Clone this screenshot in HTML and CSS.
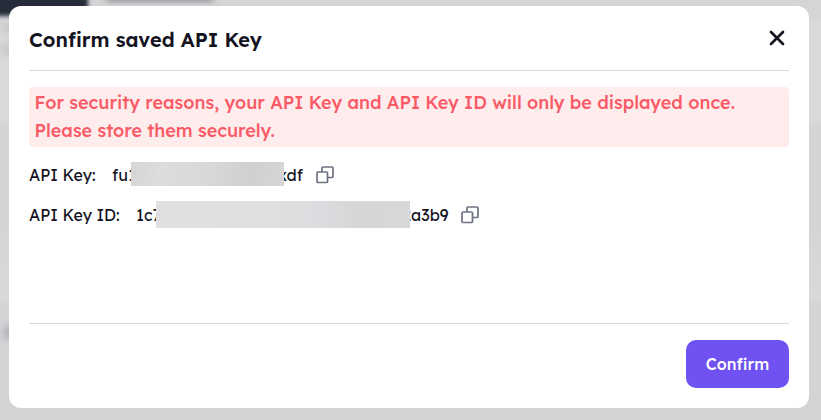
FILE: index.html
```html
<!DOCTYPE html>
<html lang="en">

<head>
    <meta charset="UTF-8">
    <meta name="viewport" content="width=device-width, initial-scale=1.0">
    <title>Confirm saved API Key</title>
    <link rel="stylesheet" href="styles.css">
</head>

<body>

    <!-- Dimmed page behind the dialog -->
    <div class="backdrop">
        <div class="dark-tab"></div>
        <div class="page-title"></div>
        <div class="side-text first"></div>
        <div class="side-text second"></div>
        <div class="side-text third"></div>
    </div>

    <div class="modal" role="dialog" aria-labelledby="title">
        <div class="modal-header">
            <h2 id="title">Confirm saved API Key</h2>
            <button class="close" aria-label="Close">
                <svg width="16" height="16" viewBox="0 0 16 16">
                    <path d="M2 2L14 14M14 2L2 14" />
                </svg>
            </button>
        </div>

        <div class="modal-body">
            <div class="warning">
                <div class="line-one">For security reasons, your API Key and API Key ID will only be displayed once.</div>
                <div class="line-two">Please store them securely.</div>
            </div>

            <div class="row">
                <span class="label key-label">API Key:</span>
                <span class="start">fu1</span>
                <span class="mask key-mask"></span>
                <span class="end">xdf</span>
                <svg class="copy" width="18" height="18" viewBox="0 0 18 18">
                    <path d="M6 6V2Q6 1 7 1H16Q17 1 17 2V10.5Q17 11.5 16 11.5H12" />
                    <rect x="1" y="6" width="10.5" height="10.5" rx="1" />
                </svg>
            </div>

            <div class="row">
                <span class="label id-label">API Key ID:</span>
                <span class="start">1c7</span>
                <span class="mask id-mask"></span>
                <span class="end id-end">2a3b9</span>
                <svg class="copy" width="18" height="18" viewBox="0 0 18 18">
                    <path d="M6 6V2Q6 1 7 1H16Q17 1 17 2V10.5Q17 11.5 16 11.5H12" />
                    <rect x="1" y="6" width="10.5" height="10.5" rx="1" />
                </svg>
            </div>
        </div>

        <div class="modal-footer">
            <button class="confirm">Confirm</button>
        </div>
    </div>

</body>

</html>
```

FILE: styles.css
```css
* {
    box-sizing: border-box;
}

body {
    font-family: Lexend, Inter, sans-serif;
    font-feature-settings: "cv08", "cv11";
    margin: 0;
    height: 420px;
    padding: 6px 12px 12px 9px;
    background-color: #d4d5d7;
    color: #14141f;
    overflow: hidden;
}

/* Backdrop */
.backdrop {
    position: absolute;
    inset: 0;
    overflow: hidden;
    background: linear-gradient(#d4d5d7 0, #d4d5d7 17px, #d9d9d9 23px, #d9d9d9 120px, #d3d4d6 126px, #d3d4d6 210px, #d7d7d8 265px, #d9d9d9 300px, #d3d4d6 306px);
}

.dark-tab {
    position: absolute;
    left: -10px;
    top: -10px;
    width: 98px;
    height: 26px;
    background-color: #262c39;
    filter: blur(2px);
}

.page-title {
    position: absolute;
    left: 106px;
    top: -7px;
    width: 107px;
    height: 8px;
    background-color: #85878b;
    filter: blur(3px);
}

.side-text {
    position: absolute;
    left: 2px;
    width: 16px;
    height: 6px;
    background-color: #b8babd;
    filter: blur(4px);
}

.first {
    top: 25px;
}

.second {
    top: 46px;
}

.third {
    left: 4px;
    top: 328px;
    height: 9px;
    background-color: #a0a2a8;
}

/* Modal */
.modal {
    position: relative;
    display: flex;
    flex-direction: column;
    width: 800px;
    height: 402px;
    padding: 0 20px 20px;
    background-color: #fff;
    border-radius: 12px;
}

.modal-header {
    display: flex;
    justify-content: space-between;
    height: 65px;
    border-bottom: 1px solid #d9d9d9;
}

h2 {
    margin: 21px 0 0;
    font-size: 20px;
    line-height: 26px;
    font-weight: 600;
    white-space: nowrap;
}

button {
    padding: 0;
    border: none;
    font-family: inherit;
    font-feature-settings: inherit;
    cursor: pointer;
}

.close {
    width: 16px;
    height: 16px;
    margin: 24px 4px 0 0;
    background: none;
}

.close svg {
    display: block;
    fill: none;
    stroke: #14141f;
    stroke-width: 2.7;
    stroke-linecap: round;
}

.modal-body {
    flex: 1;
    padding-top: 16px;
}

.warning {
    height: 60px;
    padding: 2px 5.5px;
    margin-bottom: 8px;
    background-color: #ffeced;
    border-radius: 4px;
    color: #fa5a65;
    font-size: 18px;
    line-height: 28px;
    font-weight: 500;
    white-space: nowrap;
}

.row {
    display: flex;
    align-items: center;
    height: 40px;
    font-size: 16px;
    white-space: nowrap;
}

.key-label {
    width: 83px;
}

.id-label {
    width: 107px;
}

.start {
    width: 19px;
}

.id-label + .start {
    width: 20px;
}

/* Cover over the hidden part of a key */
.mask {
    position: relative;
    z-index: 1;
    flex: none;
}

.key-mask {
    width: 153px;
    height: 24px;
    margin-top: -2px;
    background: linear-gradient(100deg, #d5d5d6, #dddddd 20%, #d8d8d8 50%, #d0d0d0 78%, #d6d6d6);
}

.id-mask {
    width: 254px;
    height: 27px;
    margin-top: -1px;
    background: linear-gradient(90deg, #e0e0e2, #dfdfe0 50%, #dcdce0 65%, #d6d6d7 80%, #d8d8da);
}

.end {
    display: flex;
    justify-content: flex-end;
    width: 19px;
    margin-right: 13px;
}

.id-end {
    width: 38.6px;
    margin-right: 12.4px;
}

.copy {
    fill: none;
    stroke: #6e7380;
    stroke-width: 1.7;
}

/* Footer */
.modal-footer {
    display: flex;
    justify-content: flex-end;
    padding-top: 16px;
    border-top: 1px solid #d9d9d9;
}

.confirm {
    width: 103px;
    height: 48px;
    border-radius: 10px;
    background-color: #7052f2;
    color: #fff;
    font-size: 16px;
    font-weight: 500;
}
```
